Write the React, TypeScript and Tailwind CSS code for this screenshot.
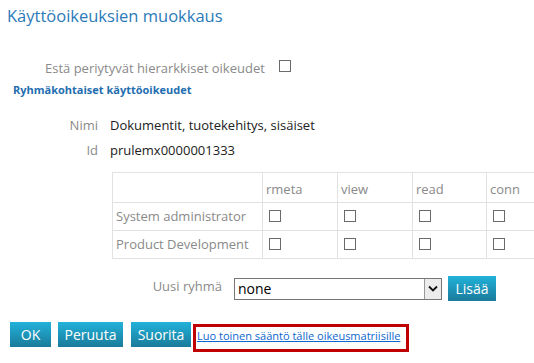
import React from 'react';

const Box = () => (
  <span className="inline-block w-[12px] h-[12px] border border-[#6a6a6a] bg-white align-middle" />
);

const perms = ['rmeta', 'view', 'read', 'conn'];
const groups = ['System administrator', 'Product Development'];

const Btn = ({ label, w }: { label: string; w: string }) => (
  <button
    className={`${w} h-[25px] text-[14px] text-white bg-gradient-to-b from-[#21b2da] to-[#1a7b9b] flex items-center justify-center`}
  >
    {label}
  </button>
);

export default function App() {
  return (
    <div className="w-[534px] h-[363px] overflow-hidden bg-white font-['Segoe_UI','Open_Sans',sans-serif] text-[13px]">
      <h1 className="pl-[7px] pt-[4px] text-[16.5px] leading-[24px] text-[#2b7bb9]">Käyttöoikeuksien muokkaus</h1>

      <div className="flex items-center mt-[33px] h-[16px]">
        <span className="ml-[45px] text-[#8a8a8a]">Estä periytyvät hierarkkiset oikeudet</span>
        <span className="ml-[14px] -mt-[7px]">
          <Box />
        </span>
      </div>

      <div className="ml-[13px] mt-[5px] text-[11px] font-bold text-[#1f6eb0] leading-[16px]">
        Ryhmäkohtaiset käyttöoikeudet
      </div>

      <div className="mt-[18px] flex flex-col gap-[9px]">
        <div className="flex items-baseline h-[16px]">
          <span className="w-[98px] text-right text-[#8a8a8a]">Nimi</span>
          <span className="ml-[12px] text-[#222]">Dokumentit, tuotekehitys, sisäiset</span>
        </div>
        <div className="flex items-baseline h-[16px]">
          <span className="w-[98px] text-right text-[#8a8a8a]">Id</span>
          <span className="ml-[12px] text-[#222]">prulemx0000001333</span>
        </div>
      </div>

      <table className="ml-[112px] mt-[15px] w-[450px] table-fixed border-collapse text-[#8a8a8a]">
        <thead>
          <tr className="h-[30px]">
            <th className="w-[150px] border border-[#e2e2e2]" />
            {perms.map((p, i) => (
              <th
                key={p}
                className={`${i === 2 ? 'w-[74px]' : 'w-[75px]'} border border-[#e2e2e2] text-left font-normal pl-[3px] align-bottom pb-[5px] leading-[16px]`}
              >
                {p}
              </th>
            ))}
          </tr>
        </thead>
        <tbody>
          {groups.map((g) => (
            <tr key={g} className="h-[28px]">
              <td className="border border-[#e2e2e2] pl-[3px] whitespace-nowrap">{g}</td>
              {perms.map((p) => (
                <td key={p} className="border border-[#e2e2e2] pl-[6px] pb-[2px]">
                  <Box />
                </td>
              ))}
            </tr>
          ))}
        </tbody>
      </table>

      <div className="flex items-center mt-[17px]">
        <span className="w-[222px] text-right text-[#8a8a8a] -mt-[4px]">Uusi ryhmä</span>
        <div className="ml-[12px] w-[208px] h-[22px] border border-[#767676] flex items-stretch bg-white">
          <span className="flex-1 pl-[3px] text-[14px] leading-[20px] text-black">none</span>
          <span className="w-[17px] border-l border-[#999] bg-[#ececec] flex items-center justify-center">
            <svg width="10" height="7" viewBox="0 0 10 7">
              <path d="M1 1.5 L5 5.5 L9 1.5" stroke="#111" strokeWidth="1.8" fill="none" />
            </svg>
          </span>
        </div>
        <div className="ml-[6px]">
          <Btn label="Lisää" w="w-[48px]" />
        </div>
      </div>

      <div className="flex items-start mt-[21px] ml-[10px]">
        <Btn label="OK" w="w-[41px]" />
        <div className="ml-[7px]">
          <Btn label="Peruuta" w="w-[65px]" />
        </div>
        <div className="ml-[8px]">
          <Btn label="Suorita" w="w-[60px]" />
        </div>
        <div className="ml-[2px] mt-[2px] w-[216px] h-[28px] border-[3px] border-[#c00000] pl-[1px]">
          <a href="#" className="text-[#0b66d0] underline text-[11px] leading-[17px] whitespace-nowrap block">
            Luo toinen sääntö tälle oikeusmatriisille
          </a>
        </div>
      </div>
    </div>
  );
}
